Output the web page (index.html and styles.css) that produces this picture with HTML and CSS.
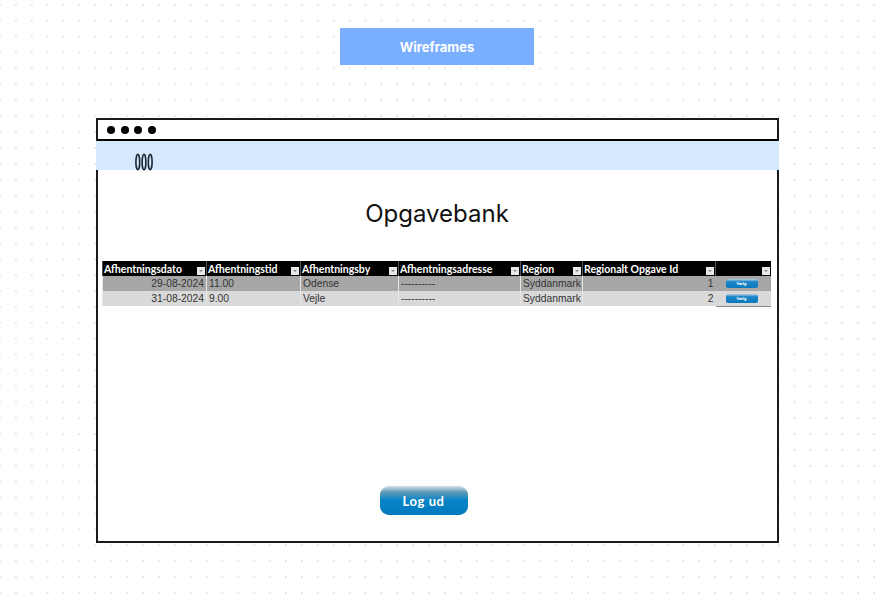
FILE: index.html
```html
<!DOCTYPE html>
<html lang="da">
<head>
  <meta charset="UTF-8">
  <meta name="viewport" content="width=device-width, initial-scale=1.0">
  <title>Wireframes</title>
  <link rel="stylesheet" href="styles.css">
</head>
<body>
  <div class="board">
    <div class="banner">Wireframes</div>

    <div class="frame">
      <div class="window-bar">
        <span class="dot"></span>
        <span class="dot"></span>
        <span class="dot"></span>
        <span class="dot"></span>
      </div>
      <div class="nav-band">
        <svg class="rings" width="18" height="18" viewBox="0 0 18 18" fill="none" stroke="#1c2433" stroke-width="1.6">
          <ellipse cx="2.8" cy="9" rx="1.9" ry="7.8"/>
          <ellipse cx="9" cy="9" rx="1.9" ry="7.8"/>
          <ellipse cx="15.2" cy="9" rx="1.9" ry="7.8"/>
        </svg>
      </div>

      <h1>Opgavebank</h1>

      <table class="task-table">
        <thead>
          <tr>
            <th class="col-date">Afhentningsdato<span class="filter"></span></th>
            <th class="col-time">Afhentningstid<span class="filter"></span></th>
            <th class="col-city">Afhentningsby<span class="filter"></span></th>
            <th class="col-addr">Afhentningsadresse<span class="filter"></span></th>
            <th class="col-region">Region<span class="filter"></span></th>
            <th class="col-id">Regionalt Opgave Id<span class="filter"></span></th>
            <th class="col-action"><span class="filter"></span></th>
          </tr>
        </thead>
        <tbody>
          <tr>
            <td class="num">29-08-2024</td>
            <td>11.00</td>
            <td>Odense</td>
            <td>----------</td>
            <td>Syddanmark</td>
            <td class="num">1</td>
            <td class="action"><button class="pick-btn">Vælg</button></td>
          </tr>
          <tr>
            <td class="num">31-08-2024</td>
            <td>9.00</td>
            <td>Vejle</td>
            <td>----------</td>
            <td>Syddanmark</td>
            <td class="num">2</td>
            <td class="action"><button class="pick-btn">Vælg</button></td>
          </tr>
        </tbody>
      </table>

      <div class="logout-row">
        <button class="logout-btn">Log ud</button>
      </div>
    </div>
  </div>
</body>
</html>
```

FILE: styles.css
```css
html, body {
  height: 100%;
}
body {
  margin: 0;
  background-color: #fff;
  background-image: radial-gradient(circle at 1px 1px, #e6e6e6 0.8px, transparent 1.2px);
  background-size: 15.9px 15.9px;
  background-position: -1px 4px;
  font-family: "Liberation Sans", Arial, sans-serif;
  overflow: hidden;
}
.board {
  width: 682px;
  margin-left: 96px;
  padding-top: 28px;
}
.banner {
  width: 194px;
  height: 37px;
  margin: 0 auto 53px;
  background-color: #7aaeff;
  color: #fff;
  font-family: Inter, sans-serif;
  font-size: 13px;
  font-weight: 700;
  line-height: 38px;
  text-align: center;
}
.frame {
  height: 425px;
  margin-right: -1px;
  box-sizing: border-box;
  border: 2px solid #1a1a1a;
  background-color: #fff;
  display: flex;
  flex-direction: column;
}
.window-bar {
  height: 19px;
  display: flex;
  align-items: center;
  gap: 5.7px;
  padding-left: 9px;
  border-bottom: 2px solid #000;
}
.dot {
  width: 8px;
  height: 8px;
  border-radius: 50%;
  background-color: #000;
}
.nav-band {
  height: 29px;
  margin: 0 -2px;
  background-color: #d4e9fd;
  display: flex;
  align-items: flex-end;
  padding-left: 39px;
}
.rings {
  display: block;
  margin-bottom: -1px;
}
h1 {
  margin: 28px 0 0 -1px;
  color: #111;
  font-family: Inter, sans-serif;
  font-size: 24px;
  font-weight: 400;
  line-height: 32px;
  text-align: center;
}
.task-table {
  width: 668px;
  margin: 31px 0 0 4px;
  border-collapse: collapse;
  table-layout: fixed;
  font-size: 10.3px;
  color: #333;
}
.task-table th {
  position: relative;
  height: 15px;
  padding: 2px 0 0 1px;
  box-sizing: border-box;
  background-color: #000;
  border-left: 1px solid #555;
  color: #fff;
  font-family: Lato, sans-serif;
  font-size: 10.5px;
  font-weight: 700;
  line-height: 13px;
  text-align: left;
  white-space: nowrap;
}
.col-date { width: 104px; }
.col-time { width: 94px; }
.col-city { width: 98px; }
.col-addr { width: 122px; }
.col-region { width: 62px; }
.col-id { width: 133px; }
.col-action { width: 55px; }

.filter {
  position: absolute;
  right: 1px;
  bottom: 1px;
  width: 8px;
  height: 8px;
  background-color: #e9e9e9;
}
.filter::after {
  content: "";
  position: absolute;
  left: 2px;
  top: 3px;
  border-left: 2px solid transparent;
  border-right: 2px solid transparent;
  border-top: 2px solid #888;
}
.task-table td {
  height: 15px;
  padding: 0 1px 0 2px;
  box-sizing: border-box;
  border-left: 1px solid #e6e6e6;
  line-height: 15px;
  white-space: nowrap;
}
.task-table tbody tr:nth-child(odd) td {
  background-color: #a6a6a6;
}
.task-table tbody tr:nth-child(even) td {
  background-color: #d9d9d9;
}
.task-table td.num {
  padding-right: 2px;
  text-align: right;
}
.task-table td.action {
  padding: 0;
  border-left: none;
}
.task-table tbody tr:last-child td.action {
  border-bottom: 1px solid #8a8a8a;
}
.pick-btn {
  display: block;
  width: 32px;
  height: 9px;
  margin: 0 0 0 10px;
  padding: 0;
  border: none;
  border-radius: 2px;
  background: linear-gradient(#b9d3e2 0, #1c86c6 30%, #0a78bd 100%);
  color: #fff;
  font-family: "Noto Sans", sans-serif;
  font-size: 4px;
  font-weight: 700;
  line-height: 9px;
}
.logout-row {
  margin-top: auto;
  padding: 0 28px 26px 0;
  display: flex;
  justify-content: center;
}
.logout-btn {
  width: 88px;
  height: 29px;
  padding: 0;
  border: none;
  border-radius: 9px;
  background: linear-gradient(#d5dfe6 0, #5d97b5 22%, #0a85c8 48%, #0079bf 100%);
  color: #fff;
  font-family: Lato, sans-serif;
  font-size: 13px;
  font-weight: 700;
  letter-spacing: 0.6px;
}
```
